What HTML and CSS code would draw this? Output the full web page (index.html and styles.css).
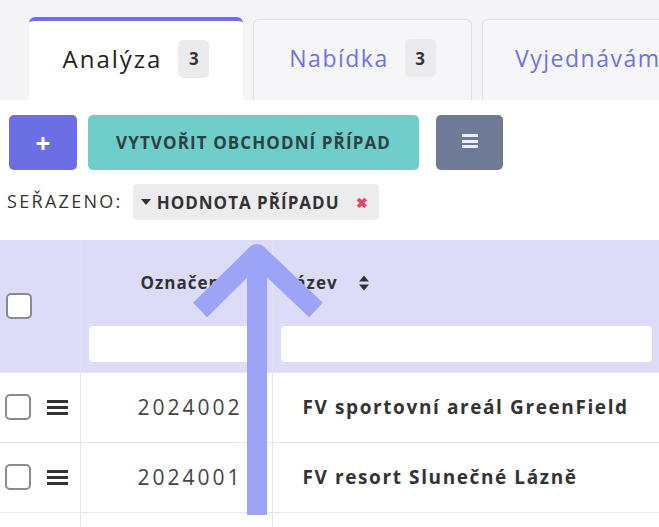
FILE: index.html
```html
<!DOCTYPE html>
<html lang="cs">
  <head>
    <meta charset="UTF-8" />
    <meta name="viewport" content="width=device-width, initial-scale=1.0" />
    <title>Obchodní případy</title>
    <link rel="stylesheet" href="styles.css">
  </head>
  <body>
    <!-- Tabs -->
    <div class="tabs">
      <div class="tab active">Analýza <span class="badge">3</span></div>
      <div class="tab">Nabídka <span class="badge">3</span></div>
      <div class="tab">Vyjednávámí</div>
    </div>

    <div class="content">
      <!-- Toolbar -->
      <div class="toolbar">
        <button class="btn btn-add">+</button>
        <button class="btn btn-create">Vytvořit obchodní případ</button>
        <button class="btn btn-menu"><span class="bars"></span></button>
      </div>

      <div class="sort-row">
        <span class="sort-label">Seřazeno:</span>
        <span class="chip">
          <span class="caret"></span>Hodnota případu
          <span class="chip-x">&#10006;</span>
        </span>
      </div>

      <!-- Table -->
      <table class="grid">
        <thead>
          <tr>
            <th class="col-check"><span class="checkbox"></span></th>
            <th class="col-id">
              <div class="th-title">Označení</div>
              <div class="filter"></div>
            </th>
            <th class="col-name">
              <div class="th-title">Název
                <svg class="sort-icon" width="10" height="16" viewBox="0 0 10 16">
                  <path d="M0 6.5 L5 0.5 L10 6.5 Z M0 9.5 L5 15.5 L10 9.5 Z" fill="#333" />
                </svg>
              </div>
              <div class="filter"></div>
            </th>
          </tr>
        </thead>
        <tbody>
          <tr>
            <td class="col-check"><span class="checkbox"></span><span class="burger"></span></td>
            <td class="col-id">2024002</td>
            <td class="col-name">FV sportovní areál GreenField</td>
          </tr>
          <tr>
            <td class="col-check"><span class="checkbox"></span><span class="burger"></span></td>
            <td class="col-id">2024001</td>
            <td class="col-name">FV resort Slunečné Lázně</td>
          </tr>
          <tr>
            <td class="col-check"></td>
            <td class="col-id"></td>
            <td class="col-name"></td>
          </tr>
        </tbody>
      </table>
    </div>

    <!-- Arrow annotation over the page -->
    <svg class="arrow" width="160" height="290" viewBox="0 0 160 290">
      <path d="M67 277 V16 M10 72 L67 16 L126 72" fill="none" stroke="#9ca4f7" stroke-width="20" stroke-linejoin="round" />
    </svg>
  </body>
</html>
```

FILE: styles.css
```css
* {
  box-sizing: border-box;
}

body {
  margin: 0;
  width: 659px;
  height: 527px;
  overflow: hidden;
  position: relative;
  font-family: "Open Sans", "Noto Sans", sans-serif;
  color: #333;
  background: #fff;
}

.content {
  width: 659px;
  overflow: hidden;
}

.tabs {
  display: flex;
  gap: 10px;
  padding: 17px 0 0 29px;
  height: 100px;
  background: #f4f4f6;
  white-space: nowrap;
  overflow: hidden;
}

.tab {
  display: flex;
  align-items: center;
  gap: 16px;
  flex: 0 0 219px;
  justify-content: center;
  margin-top: 2px;
  padding-bottom: 4px;
  border: 1px solid #dedee3;
  border-bottom: none;
  border-radius: 6px 6px 0 0;
  background: #f6f6f8;
  color: #6c72ea;
  font-size: 23px;
  letter-spacing: 1.5px;
}

.tab.active {
  flex-basis: 214px;
  margin-top: 0;
  background: #fff;
  border: none;
  border-top: 4px solid #6b6ee6;
  color: #222;
  font-size: 24px;
  letter-spacing: 2px;
}

.tab:last-child {
  justify-content: flex-start;
  padding-left: 32px;
}

.badge {
  display: inline-flex;
  align-items: center;
  justify-content: center;
  width: 31px;
  height: 38px;
  border-radius: 5px;
  background: #ebebed;
  color: #333;
  font-size: 17px;
  font-weight: 700;
  letter-spacing: 0;
}

.toolbar {
  display: flex;
  padding: 15px 0 0 9px;
}

.btn {
  height: 55px;
  border: none;
  border-radius: 5px;
  font-family: inherit;
  cursor: pointer;
}

.btn-add {
  width: 68px;
  background: #6c6fe4;
  color: #fff;
  font-size: 26px;
  font-weight: 700;
}

.btn-create {
  width: 331px;
  margin-left: 11px;
  padding: 0;
  background: #6fcdca;
  color: #2c4142;
  font-size: 17px;
  font-weight: 700;
  text-transform: uppercase;
  letter-spacing: 1.1px;
}

.btn-menu {
  width: 67px;
  margin-left: 17px;
  background: #6f7a96;
}

.bars {
  display: inline-block;
  width: 16px;
  height: 14px;
  background: linear-gradient(#eef 0 3px, transparent 3px 5.5px, #eef 5.5px 8.5px, transparent 8.5px 11px, #eef 11px 14px);
  border-radius: 1px;
}

.sort-row {
  display: flex;
  gap: 10px;
  padding: 14px 0 0 7px;
  height: 70px;
  align-items: flex-start;
}

.sort-label {
  margin-top: 5px;
  font-size: 18px;
  text-transform: uppercase;
  letter-spacing: 2.3px;
  color: #333;
}

.chip {
  display: inline-flex;
  align-items: center;
  height: 36px;
  width: 246px;
  padding: 0 10px 0 8px;
  border-radius: 5px;
  background: #ececee;
  font-size: 17px;
  font-weight: 700;
  text-transform: uppercase;
  letter-spacing: 1px;
  color: #333;
}

.caret {
  width: 0;
  height: 0;
  margin-right: 6px;
  border-left: 5px solid transparent;
  border-right: 5px solid transparent;
  border-top: 6px solid #333;
}

.chip-x {
  margin-left: auto;
  color: #e8426a;
  font-size: 14px;
}

.grid {
  width: 700px;
  border-collapse: collapse;
  table-layout: fixed;
}

.grid th,
.grid td {
  border-right: 1px solid #e4e4f3;
  border-bottom: 1px solid #e7e7f2;
  padding: 0;
}

.grid thead tr {
  height: 132px;
  background: #dddcf8;
}

.col-check {
  width: 80px;
}

.col-id {
  width: 192px;
}

th.col-check {
  padding-left: 6px !important;
  text-align: left;
}

th.col-id,
th.col-name {
  vertical-align: top;
  padding: 31px 9px 0 8px !important;
}

th.col-name {
  padding-right: 47px !important;
}

.th-title {
  height: 55px;
  font-size: 17px;
  font-weight: 700;
  letter-spacing: 1px;
  text-align: left;
  color: #333;
}

th.col-id .th-title {
  padding-left: 52px;
}

.sort-icon {
  margin-left: 16px;
  vertical-align: -2px;
}

.filter {
  height: 36px;
  border-radius: 4px;
  background: #fff;
}

.checkbox {
  display: inline-block;
  width: 26px;
  height: 26px;
  border: 2px solid #8a8a8f;
  border-radius: 5px;
  background: #fff;
  vertical-align: middle;
}

.grid tbody tr {
  height: 70px;
}

.grid tbody td.col-check {
  padding-left: 5px;
}

.burger {
  display: inline-block;
  width: 21px;
  height: 15px;
  margin-left: 16px;
  vertical-align: middle;
  background: linear-gradient(#333 0 3px, transparent 3px 6px, #333 6px 9px, transparent 9px 12px, #333 12px 15px);
}

.grid tbody td.col-id {
  text-align: right;
  padding-right: 29px;
  font-size: 21px;
  color: #444;
  letter-spacing: 3px;
}

.grid tbody td.col-name {
  padding-left: 30px;
  font-size: 19px;
  font-weight: 700;
  letter-spacing: 1.6px;
  color: #333;
  white-space: nowrap;
}

.arrow {
  position: absolute;
  left: 190px;
  top: 238px;
}
```
